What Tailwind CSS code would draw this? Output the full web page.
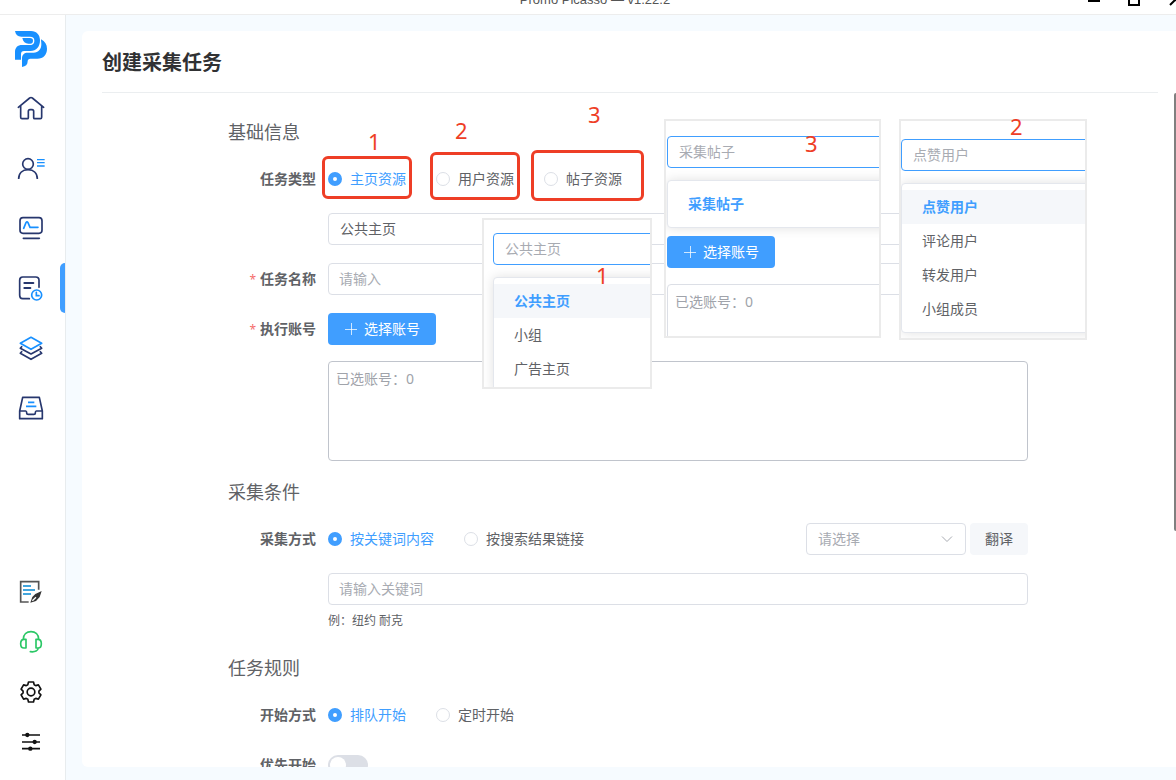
<!DOCTYPE html>
<html lang="zh-CN">
<head>
<meta charset="utf-8">
<meta name="viewport" content="width=device-width, initial-scale=1">
<title>Promo Picasso — v1.22.2</title>
<script src="https://cdn.jsdelivr.net/npm/@tailwindcss/browser@4"></script>
</head>
<body class="flex h-screen flex-col overflow-hidden bg-white font-['Noto_Sans','Noto_Sans_CJK_SC',sans-serif] text-sm text-[#606266]">

<!-- Window title bar -->
<header class="h-[15px] shrink-0 overflow-hidden border-b border-[#ededed] bg-white">
  <div class="relative -mt-3.5 flex h-7 items-center justify-center pl-3.5 font-['Liberation_Sans',sans-serif] text-[13px] text-[#555]">
    <span>Promo Picasso — v1.22.2</span>
    <div class="absolute -right-2 top-0 flex h-7 items-center gap-7 text-black">
      <button type="button" aria-label="最小化"><svg class="size-3" viewBox="0 0 12 12" fill="none" stroke="currentColor" stroke-width="2"><path d="M0 7h12"/></svg></button>
      <button type="button" aria-label="最大化"><svg class="h-4 w-3" viewBox="0 0 12 16" fill="none" stroke="currentColor" stroke-width="2"><path d="M1 3h10v10H1z"/></svg></button>
      <button type="button" aria-label="关闭"><svg class="size-4" viewBox="0 0 16 16" fill="none" stroke="currentColor" stroke-width="2"><path d="M2 2l11 11M13 2L2 13"/></svg></button>
    </div>
  </div>
</header>

<div class="flex min-h-0 flex-1">
  <!-- Sidebar -->
  <aside class="flex w-[66px] shrink-0 flex-col border-r border-[#e8ecee] bg-white pb-[13px] pt-4">
    <a href="#" aria-label="Promo Picasso" class="mb-[11px] ml-[15px] block h-9 w-8">
      <svg class="h-9 w-8" viewBox="0 0 96 108" fill="#1890ff">
        <path d="M0 0H48C65 0 75 12 75 28C75 47 64 60 46 60H27C21 60 18 63 18 69V86H0V63C0 50 8 42 21 42H45C55 42 58 36 58 29C58 20 54 17 45 17H19C8 17 2 11 0 0Z"/>
        <path d="M22 21H45C51 21 54 24 54 29C54 34 51 38 46 38H40C31 38 24 32 22 21Z"/>
        <path d="M78 25C90 31 96 41 96 53C96 71 85 83 67 83H46C41 83 38 86 38 91C38 101 32 107 21 108V82C21 71 28 65 38 65H56C70 65 79 55 79 40C79 34 78 30 78 25Z"/>
      </svg>
    </a>
    <nav class="flex flex-1 flex-col" aria-label="主导航">
      <a href="#" aria-label="首页" class="flex h-[60px] items-center pl-4">
        <svg class="size-[30px]" viewBox="0 0 90 90" fill="none" stroke="#27376e" stroke-width="5" stroke-linecap="round" stroke-linejoin="round"><path d="M7 43L41 15Q45 12 49 15L83 43M14 38V73Q14 77 18 77H34Q37 77 37 74V55Q37 50 42 50H48Q53 50 53 55V74Q53 77 56 77H73Q77 77 77 73V38"/></svg>
      </a>
      <a href="#" aria-label="用户" class="flex h-[60px] items-center pl-4">
        <svg class="size-[30px]" viewBox="0 0 90 90" fill="none" stroke="#27376e" stroke-width="5"><circle cx="36" cy="33" r="16"/><path d="M8 78C8 60 20 50 36 50S64 60 64 78"/><path stroke="#1890ff" stroke-width="4" d="M63 20H86M63 29H86M63 39H86"/></svg>
      </a>
      <a href="#" aria-label="监控" class="flex h-[60px] items-center pl-4">
        <svg class="size-[30px]" viewBox="0 0 90 90" fill="none" stroke="#27376e" stroke-width="5" stroke-linecap="round"><rect x="12" y="14" width="66" height="47" rx="9"/><path d="M22 76H70"/><path stroke="#1890ff" stroke-linejoin="round" d="M23 46L30 29Q33 24 36 29L42 43H66"/></svg>
      </a>
      <a href="#" aria-label="任务" aria-current="page" class="relative flex h-[60px] items-center pl-4">
        <svg class="size-[30px]" viewBox="0 0 90 90" fill="none" stroke="#27376e" stroke-width="5" stroke-linecap="round"><path d="M69 43V22Q69 12 59 12H20Q11 12 11 22V67Q11 77 20 77H40"/><path stroke-width="6" d="M25 30H52M25 45H43"/><g stroke="#1890ff"><circle cx="62" cy="66" r="15"/><path d="M61 58V68H69"/></g></svg>
        <span class="absolute right-0 top-[5px] h-[50px] w-[5px] rounded-l-md bg-[#409eff]"></span>
      </a>
      <a href="#" aria-label="素材" class="flex h-[60px] items-center pl-4">
        <svg class="size-[30px]" viewBox="0 0 90 90" fill="none" stroke="#27376e" stroke-width="5" stroke-linejoin="round" stroke-linecap="round"><path stroke="#1890ff" d="M13 31L45 13L77 31L45 49Z"/><path d="M17 41L13 46L45 63L77 46L73 41M17 56L13 61L45 79L77 61L73 56"/></svg>
      </a>
      <a href="#" aria-label="收件箱" class="flex h-[60px] items-center pl-4">
        <svg class="size-[30px]" viewBox="0 0 90 90" fill="none" stroke="#27376e" stroke-width="5" stroke-linejoin="round"><path d="M11 54L20 13H70L79 54V77H11ZM11 54H29Q32 54 32 59Q32 64 37 64H53Q58 64 58 59Q58 54 61 54H79"/><path stroke="#1890ff" d="M36 28H55M30 40H61"/></svg>
      </a>
    </nav>
    <nav class="flex flex-col" aria-label="工具">
      <a href="#" aria-label="日志" class="flex h-[50px] items-center pl-4">
        <svg class="size-[30px]" viewBox="0 0 90 90" fill="none" stroke="#555" stroke-width="5"><path d="M68 38V14H14V75H38"/><path stroke="#42a5dd" stroke-width="6" d="M21 27H45M21 39H57M21 51H45"/><path fill="#333" stroke="none" d="M77 42L71 60L60 72L43 77L49 60L58 51Z"/><path stroke="#fff" stroke-width="4" d="M49 71L60 61"/></svg>
      </a>
      <a href="#" aria-label="客服" class="flex h-[50px] items-center pl-4">
        <svg class="size-[30px]" viewBox="0 0 90 90" fill="none" stroke="#2bc766" stroke-width="5" stroke-linecap="round" stroke-linejoin="round"><path d="M22 37C22 22 32 14 45 14S68 22 68 37M30 37V63H24C17 63 14 57 14 50S17 37 24 37ZM60 37V63H66C73 63 76 57 76 50S73 37 66 37ZM67 63C66 71 58 76 43 74"/></svg>
      </a>
      <a href="#" aria-label="设置" class="flex h-[50px] items-center pl-4">
        <svg class="size-[30px]" viewBox="0 0 90 90" fill="none" stroke="#111" stroke-width="5" stroke-linejoin="round"><path d="M35.500 23L37.500 15H52.500L54.500 23L59.300 25.800L67.200 23.500L74.700 36.500L68.800 42.200V47.800L74.700 53.500L67.200 66.500L59.300 64.200L54.500 67L52.500 75H37.500L35.500 67L30.700 64.200L22.800 66.500L15.300 53.500L21.200 47.800V42.200L15.300 36.500L22.800 23.500L30.700 25.800Z"/><circle cx="45" cy="45" r="11.500"/></svg>
      </a>
      <a href="#" aria-label="偏好" class="flex h-[50px] items-center pl-4">
        <svg class="size-[30px]" viewBox="0 0 90 90" fill="#111" stroke="#111" stroke-width="5"><path d="M18 24H72M18 45H72M18 65H72"/><g stroke="none"><circle cx="34" cy="24" r="6.500"/><circle cx="56" cy="45" r="6.500"/><circle cx="43" cy="65" r="6.500"/></g></svg>
      </a>
    </nav>
  </aside>

  <!-- Page -->
  <main class="flex min-w-0 flex-1 bg-[#f6fbff] pb-[13px] pl-4 pt-4">
    <section class="relative flex min-w-0 flex-1 flex-col rounded-l-md bg-white pl-5">
      <h1 class="mr-[18px] flex h-[62px] shrink-0 items-center border-b border-[#ebeef0] pt-0.5 text-xl font-bold text-[#303133]">创建采集任务</h1>
      <span class="absolute right-0 top-[62px] h-[438px] w-0.5 rounded-l bg-[#808080]"></span>

      <div class="min-h-0 flex-1 overflow-hidden pr-[22px]">
        <form class="relative mx-auto max-w-[800px] pt-[25px]">
          <h2 class="mb-[17px] h-7 text-lg leading-7">基础信息</h2>

          <div role="radiogroup" aria-labelledby="type-label" class="mb-[18px] flex h-8 items-center">
            <span id="type-label" class="w-[100px] shrink-0 pr-3 text-right font-bold">任务类型</span>
            <div class="flex items-center gap-[30px]">
              <label class="flex items-center gap-2 text-[#409eff]"><input type="radio" name="type" checked class="size-3.5 appearance-none rounded-full border border-[#dcdfe6] checked:border-[5px] checked:border-[#409eff]">主页资源</label>
              <label class="flex items-center gap-2"><input type="radio" name="type" class="size-3.5 appearance-none rounded-full border border-[#dcdfe6] checked:border-[5px] checked:border-[#409eff]">用户资源</label>
              <label class="flex items-center gap-2"><input type="radio" name="type" class="size-3.5 appearance-none rounded-full border border-[#dcdfe6] checked:border-[5px] checked:border-[#409eff]">帖子资源</label>
            </div>
          </div>

          <div class="mb-[18px] flex pl-[100px]">
            <select aria-label="主页类型" class="h-8 w-full appearance-none rounded border border-[#dcdfe6] bg-white px-[11px]"><option>公共主页</option><option>小组</option><option>广告主页</option></select>
          </div>

          <div class="mb-[18px] flex items-center">
            <label for="task-name" class="w-[100px] shrink-0 pr-3 text-right font-bold"><span class="mr-1 text-xs font-normal text-[#f56c6c]">*</span>任务名称</label>
            <input id="task-name" type="text" placeholder="请输入" class="h-8 w-full rounded border border-[#dcdfe6] px-2.5 pb-0.5 placeholder:text-[#a8abb2]">
          </div>

          <div class="mb-4 flex items-center">
            <label for="pick-account" class="w-[100px] shrink-0 pr-3 text-right font-bold"><span class="mr-1 text-xs font-normal text-[#f56c6c]">*</span>执行账号</label>
            <button id="pick-account" type="button" class="flex h-8 items-center gap-1.5 rounded bg-[#409eff] px-4 text-white"><svg class="size-3.5" viewBox="0 0 14 14" fill="none" stroke="currentColor" stroke-opacity=".75"><path d="M1 7.500h12M7.500 1v12"/></svg>选择账号</button>
          </div>

          <div class="mb-[17px] flex pl-[100px]">
            <textarea aria-label="已选账号" placeholder="已选账号：0" class="h-[100px] w-full resize-none rounded border border-[#c0c4cc] px-[7px] py-[7px] leading-5 placeholder:text-[#a0a3aa]"></textarea>
          </div>

          <h2 class="mb-[17px] h-7 text-lg leading-7">采集条件</h2>

          <div role="radiogroup" aria-labelledby="method-label" class="mb-[18px] flex h-8 items-center">
            <span id="method-label" class="w-[100px] shrink-0 pr-3 text-right font-bold">采集方式</span>
            <div class="flex flex-1 items-center gap-[30px]">
              <label class="flex items-center gap-2 text-[#409eff]"><input type="radio" name="method" checked class="size-3.5 appearance-none rounded-full border border-[#dcdfe6] checked:border-[5px] checked:border-[#409eff]">按关键词内容</label>
              <label class="flex items-center gap-2"><input type="radio" name="method" class="size-3.5 appearance-none rounded-full border border-[#dcdfe6] checked:border-[5px] checked:border-[#409eff]">按搜索结果链接</label>
            </div>
            <div class="flex items-center gap-1">
              <div class="relative">
                <select aria-label="翻译语言" class="h-8 w-40 appearance-none rounded border border-[#dcdfe6] bg-white px-[11px] text-[#a8abb2]"><option>请选择</option></select>
                <svg class="pointer-events-none absolute right-3 top-[9px] size-3.5" viewBox="0 0 14 14" fill="none" stroke="#a8abb2"><path d="M2 4.500l5 5 5-5"/></svg>
              </div>
              <button type="button" class="h-8 rounded bg-[#f5f7fa] px-[15px]">翻译</button>
            </div>
          </div>

          <div class="mb-[25px] pl-[100px]">
            <input type="text" aria-label="关键词" placeholder="请输入关键词" class="block h-8 w-full rounded border border-[#dcdfe6] px-2.5 pb-0.5 placeholder:text-[#a8abb2]">
            <p class="mt-2 text-xs">例：纽约 耐克</p>
          </div>

          <h2 class="mb-[17px] h-7 text-lg leading-7">任务规则</h2>

          <div role="radiogroup" aria-labelledby="start-label" class="mb-[18px] flex h-8 items-center">
            <span id="start-label" class="w-[100px] shrink-0 pr-3 text-right font-bold">开始方式</span>
            <div class="flex items-center gap-[30px]">
              <label class="flex items-center gap-2 text-[#409eff]"><input type="radio" name="start" checked class="size-3.5 appearance-none rounded-full border border-[#dcdfe6] checked:border-[5px] checked:border-[#409eff]">排队开始</label>
              <label class="flex items-center gap-2"><input type="radio" name="start" class="size-3.5 appearance-none rounded-full border border-[#dcdfe6] checked:border-[5px] checked:border-[#409eff]">定时开始</label>
            </div>
          </div>

          <div class="flex h-8 items-center">
            <label for="priority" class="w-[100px] shrink-0 pr-3 text-right font-bold">优先开始</label>
            <input id="priority" type="checkbox" role="switch" class="h-5 w-10 appearance-none rounded-full bg-[#dcdfe6] p-0.5 before:block before:size-4 before:rounded-full before:bg-white checked:bg-[#409eff]">
          </div>

          <!-- Annotation boxes around the radio options -->
          <span class="pointer-events-none absolute left-[94px] top-[63px] h-[43px] w-[90px] rounded-md border-3 border-[#ee3e26]"></span>
          <span class="pointer-events-none absolute left-[202px] top-[59px] h-12 w-[90px] rounded-md border-3 border-[#ee3e26]"></span>
          <span class="pointer-events-none absolute left-[303px] top-[57px] h-[51px] w-[113px] rounded-md border-3 border-[#ee3e26]"></span>

          <!-- Panel 1: page options -->
          <div class="absolute left-[254px] top-[125px] h-[171px] w-[170px] overflow-hidden border-2 border-[#ebebeb] bg-white pl-[9px] pt-[13px]">
            <input type="text" aria-label="主页选项" placeholder="公共主页" class="mb-3 block h-8 w-[200px] rounded border border-[#409eff] px-[11px] pb-0.5 placeholder:text-[#a8abb2]">
            <ul class="w-[200px] rounded border border-[#e4e7ed] bg-white py-1.5 leading-[34px] shadow-[0_0_12px_rgba(0,0,0,0.12)]">
              <li class="bg-[#f5f7fa] px-5 font-bold text-[#409eff]">公共主页</li>
              <li class="px-5">小组</li>
              <li class="px-5">广告主页</li>
            </ul>
          </div>

          <!-- Panel 2: post options -->
          <div class="absolute left-[436px] top-[26px] h-[219px] w-[217px] overflow-hidden border-2 border-[#ebebeb] bg-white pl-px pt-[15px]">
            <input type="text" aria-label="帖子选项" placeholder="采集帖子" class="mb-3 block h-8 w-[260px] rounded border border-[#409eff] px-[11px] pb-0.5 placeholder:text-[#a8abb2]">
            <ul class="mb-2 w-[260px] rounded border border-[#e4e7ed] bg-white py-1.5 leading-[34px] shadow-[0_0_12px_rgba(0,0,0,0.12)]">
              <li class="px-5 font-bold text-[#409eff]">采集帖子</li>
            </ul>
            <button type="button" class="mb-4 flex h-8 items-center gap-1.5 rounded bg-[#409eff] px-4 text-white"><svg class="size-3.5" viewBox="0 0 14 14" fill="none" stroke="currentColor" stroke-opacity=".75"><path d="M1 7.500h12M7.500 1v12"/></svg>选择账号</button>
            <textarea aria-label="帖子已选账号" placeholder="已选账号：0" class="block h-[100px] w-[260px] resize-none rounded border border-[#dcdfe6] px-[7px] py-[7px] leading-5 placeholder:text-[#a0a3aa]"></textarea>
          </div>

          <!-- Panel 3: user options -->
          <div class="absolute left-[671px] top-[26px] h-[221px] w-[188px] overflow-hidden border-2 border-[#ebebeb] bg-white pt-[18px]">
            <input type="text" aria-label="用户选项" placeholder="点赞用户" class="mb-3 block h-8 w-[220px] rounded border border-[#409eff] px-[11px] pb-0.5 placeholder:text-[#a8abb2]">
            <ul class="w-[220px] rounded border border-[#e4e7ed] bg-white py-1.5 leading-[34px] shadow-[0_0_12px_rgba(0,0,0,0.12)]">
              <li class="bg-[#f5f7fa] px-5 font-bold text-[#409eff]">点赞用户</li>
              <li class="px-5">评论用户</li>
              <li class="px-5">转发用户</li>
              <li class="px-5">小组成员</li>
            </ul>
          </div>

          <!-- Annotation numbers -->
          <div class="pointer-events-none text-[22px] leading-6 text-[#ee3e26]">
            <span class="absolute left-[140px] top-9">1</span>
            <span class="absolute left-[227px] top-[25px]">2</span>
            <span class="absolute left-[360px] top-[9px]">3</span>
            <span class="absolute left-[368px] top-[170px]">1</span>
            <span class="absolute left-[577px] top-[38px]">3</span>
            <span class="absolute left-[782px] top-[21px]">2</span>
          </div>
        </form>
      </div>
    </section>
  </main>
</div>
</body>
</html>
